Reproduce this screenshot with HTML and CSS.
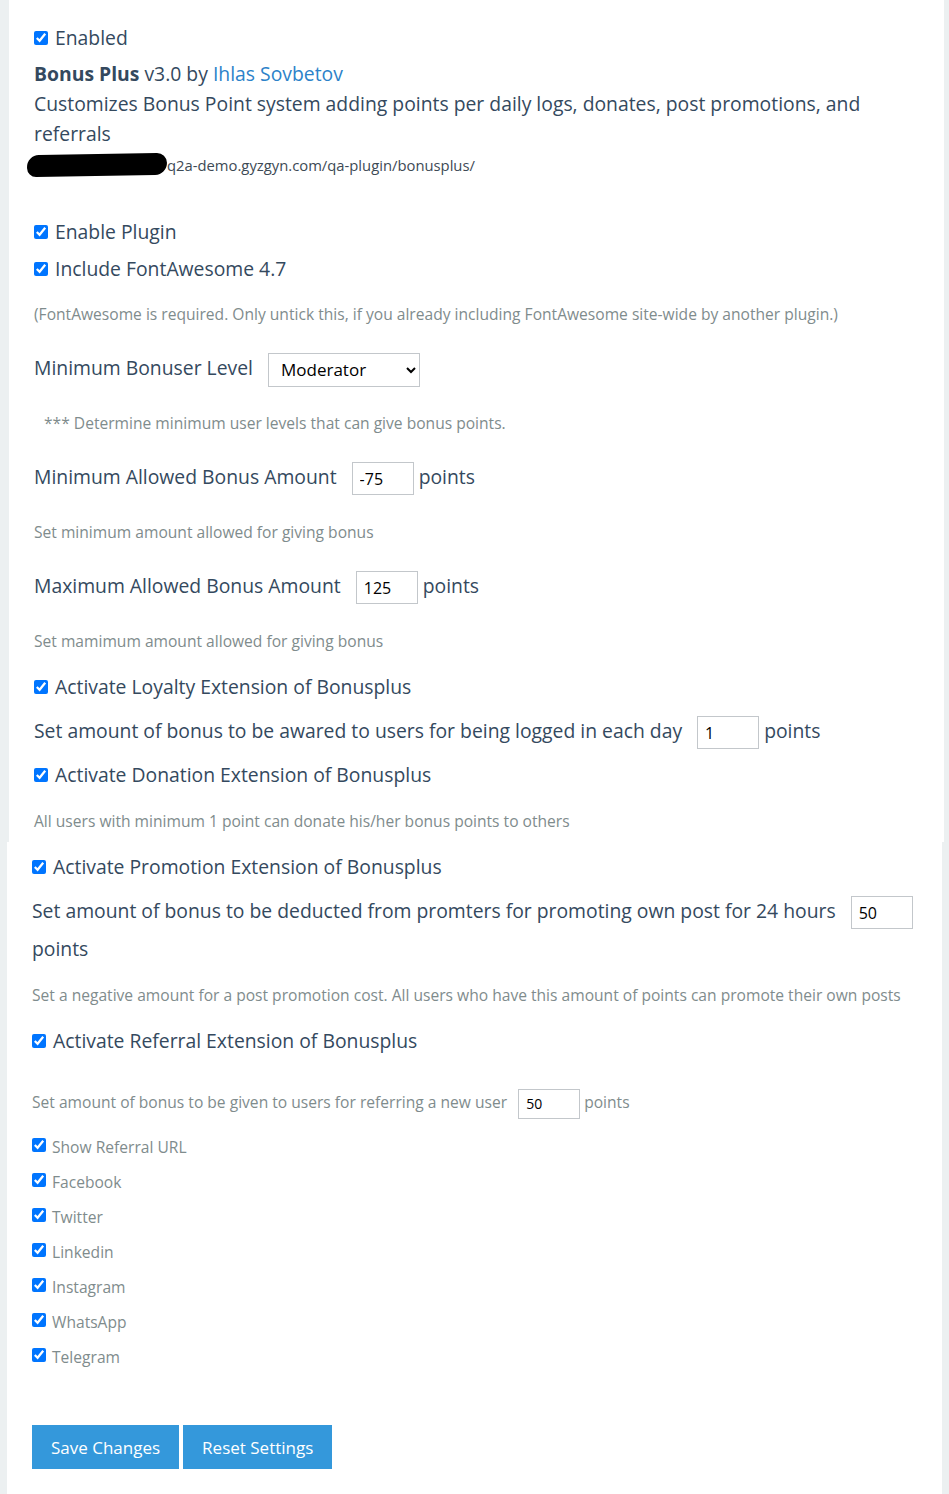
FILE: index.html
```html
<!DOCTYPE html>
<html lang="en">
<head>
<meta charset="utf-8">
<title>Bonus Plus settings</title>
<link rel="stylesheet" href="styles.css">
</head>
<body>
<div class="page">
  <section class="panel panel-top">
    <label class="check-row"><input type="checkbox" checked><span>Enabled</span></label>
    <p class="plugin-title"><strong>Bonus Plus</strong> v3.0 by <a href="#" class="author">Ihlas Sovbetov</a></p>
    <p class="plugin-desc">Customizes Bonus Point system adding points per daily logs, donates, post promotions, and referrals</p>
    <p class="plugin-url"><span class="redact"></span>q2a-demo.gyzgyn.com/qa-plugin/bonusplus/</p>

    <label class="check-row after-url"><input type="checkbox" checked><span>Enable Plugin</span></label>
    <label class="check-row after-check"><input type="checkbox" checked><span>Include FontAwesome 4.7</span></label>
    <p class="note after-check-note">(FontAwesome is required. Only untick this, if you already including FontAwesome site-wide by another plugin.)</p>

    <p class="field-row after-note">Minimum Bonuser Level <select class="level-select"><option>Moderator</option></select></p>
    <p class="note note-indent after-row">*** Determine minimum user levels that can give bonus points.</p>

    <p class="field-row after-note">Minimum Allowed Bonus Amount <input class="num-input" type="text" value="-75"> points</p>
    <p class="note after-row">Set minimum amount allowed for giving bonus</p>

    <p class="field-row after-note">Maximum Allowed Bonus Amount <input class="num-input" type="text" value="125"> points</p>
    <p class="note after-row">Set mamimum amount allowed for giving bonus</p>

    <label class="check-row after-note-check"><input type="checkbox" checked><span>Activate Loyalty Extension of Bonusplus</span></label>
    <p class="field-row after-check-row">Set amount of bonus to be awared to users for being logged in each day <input class="num-input" type="text" value="1"> points</p>
    <label class="check-row after-row-check"><input type="checkbox" checked><span>Activate Donation Extension of Bonusplus</span></label>
    <p class="note after-check-note donation-note">All users with minimum 1 point can donate his/her bonus points to others</p>
  </section>

  <section class="panel panel-bottom">
    <label class="check-row"><input type="checkbox" checked><span>Activate Promotion Extension of Bonusplus</span></label>
    <p class="field-row after-check-row">Set amount of bonus to be deducted from promters for promoting own post for 24 hours <input class="num-input" type="text" value="50"> points</p>
    <p class="note after-promo">Set a negative amount for a post promotion cost. All users who have this amount of points can promote their own posts</p>

    <label class="check-row after-note-check"><input type="checkbox" checked><span>Activate Referral Extension of Bonusplus</span></label>
    <p class="field-row small after-referral">Set amount of bonus to be given to users for referring a new user <input class="num-input small-input" type="text" value="50"> points</p>

    <ul class="share-list">
      <li><label class="check-row small"><input type="checkbox" checked><span>Show Referral URL</span></label></li>
      <li><label class="check-row small"><input type="checkbox" checked><span>Facebook</span></label></li>
      <li><label class="check-row small"><input type="checkbox" checked><span>Twitter</span></label></li>
      <li><label class="check-row small"><input type="checkbox" checked><span>Linkedin</span></label></li>
      <li><label class="check-row small"><input type="checkbox" checked><span>Instagram</span></label></li>
      <li><label class="check-row small"><input type="checkbox" checked><span>WhatsApp</span></label></li>
      <li><label class="check-row small"><input type="checkbox" checked><span>Telegram</span></label></li>
    </ul>

    <div class="actions">
      <button class="btn" type="button">Save Changes</button>
      <button class="btn" type="button">Reset Settings</button>
    </div>
  </section>
</div>
</body>
</html>
```
FILE: styles.css
```css
* { box-sizing: border-box; }

html, body {
  margin: 0;
  padding: 0;
  background: #ecf0f1;
}

body {
  font-family: "Open Sans", "Noto Sans", sans-serif;
  font-size: 19.35px;
  color: #34495e;
  width: 949px;
  height: 1494px;
  overflow: hidden;
}

.page {
  display: flex;
  flex-direction: column;
}

.panel {
  background: #fff;
  width: 935px;
}

.panel-top {
  margin-left: 9px;
  padding: 23px 25px 9px 25px;
}

.panel-bottom {
  margin-left: 7px;
  padding: 10px 25px 30px 25px;
  flex: 1;
  min-height: 652px;
}

p { margin: 0; }

.check-row {
  display: flex;
  align-items: center;
  height: 30px;
  line-height: 30px;
}

.check-row input {
  margin: 0 7px 0 0;
  width: 14px;
  height: 14px;
  accent-color: #0075ff;
  flex: none;
}

.check-row.small {
  height: 24px;
  line-height: 24px;
  font-size: 15.6px;
  color: #7f8c8d;
}

.check-row.small input {
  margin-right: 6px;
  position: relative;
  top: -2px;
}

.plugin-title {
  margin-top: 6px;
  line-height: 30px;
}

.plugin-title strong { font-weight: 700; }

.author {
  color: #2c82c9;
  text-decoration: none;
}

.plugin-desc {
  line-height: 30px;
}

.plugin-url {
  margin-top: 5px;
  font-size: 14.8px;
  height: 22px;
  line-height: 22px;
  color: #3d4a55;
  display: flex;
  align-items: center;
}

.redact {
  display: inline-block;
  width: 140px;
  height: 22px;
  margin-left: -7px;
  background: #000;
  border-radius: 12px 10px 12px 9px;
  transform: rotate(-1deg);
}

.note {
  font-size: 15.6px;
  line-height: 24px;
  color: #7f8c8d;
}

.note-indent { padding-left: 10px; }

.field-row {
  line-height: 38px;
}

.field-row.small {
  font-size: 15.6px;
  color: #7f8c8d;
}

.num-input {
  width: 62px;
  height: 33px;
  margin-left: 10px;
  padding: 0 7px;
  border: 1px solid #c3c7cb;
  border-radius: 0;
  font-family: "Open Sans", "Noto Sans", sans-serif;
  font-size: 16px;
  color: #000;
  vertical-align: middle;
  background: #fff;
}

.small-input {
  height: 30px;
  font-size: 14px;
  margin-left: 7px;
}

.level-select {
  width: 152px;
  height: 34px;
  margin-left: 10px;
  padding: 0 8px;
  border: 1px solid #c3c7cb;
  border-radius: 0;
  background: #fff;
  font-family: "Open Sans", "Noto Sans", sans-serif;
  font-size: 17px;
  color: #000;
  vertical-align: middle;
}

/* vertical rhythm */
.after-url { margin-top: 41px; }
.after-check { margin-top: 7px; }
.after-check-note { margin-top: 18px; }
.donation-note { margin-top: 19px; }
.after-note { margin-top: 23px; }
.after-row { margin-top: 24px; }
.after-note-check { margin-top: 19px; }
.after-check-row { margin-top: 10px; }
.after-row-check { margin-top: 10px; }
.after-promo { margin-top: 15px; }
.after-referral { margin-top: 27px; }

.share-list {
  list-style: none;
  margin: 14px 0 0 0;
  padding: 0;
  display: flex;
  flex-direction: column;
  gap: 11px;
}

.actions {
  margin-top: 56px;
  display: flex;
  gap: 4px;
}

.btn {
  height: 44px;
  padding: 0 19px;
  border: none;
  border-radius: 0;
  background: #3498db;
  color: #fff;
  font-family: "Open Sans", "Noto Sans", sans-serif;
  font-size: 17px;
  cursor: pointer;
}
```
